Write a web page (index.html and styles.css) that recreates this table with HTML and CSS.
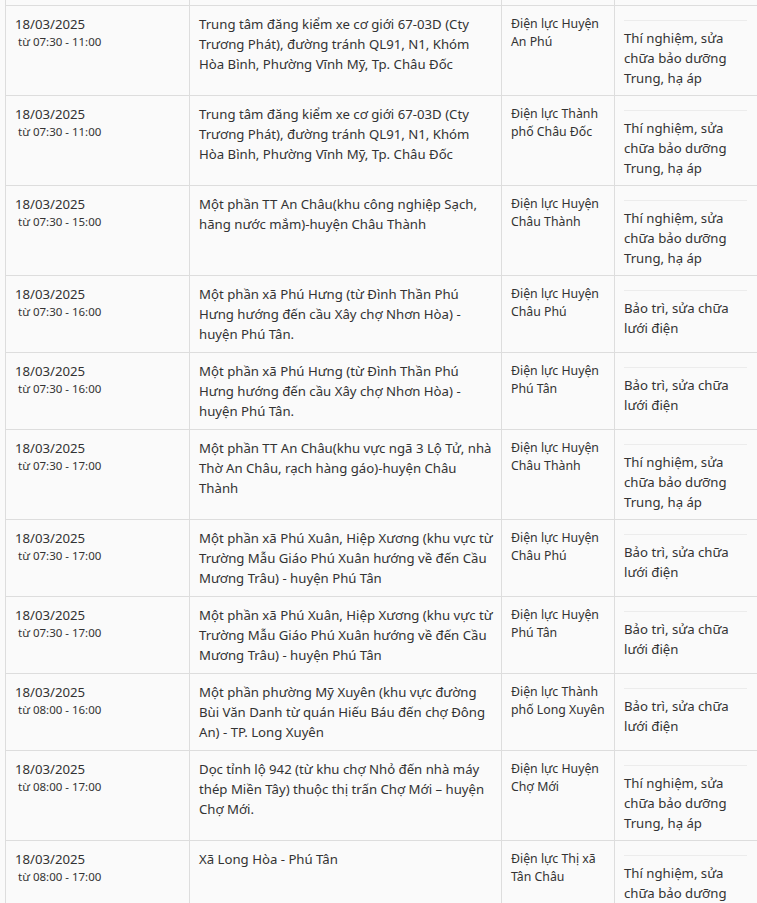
FILE: index.html
```html
<!DOCTYPE html>
<html lang="vi">
<head>
<meta charset="utf-8">
<title>Lịch cắt điện</title>
<link rel="stylesheet" href="styles.css">
</head>
<body>
<div class="wrap">
<table class="sched">
<colgroup>
<col class="c-date"><col class="c-area"><col class="c-unit"><col class="c-reason">
</colgroup>
<tbody>
<tr class="cut"><td></td><td></td><td></td><td></td></tr>
<tr>
<td><div class="date">18/03/2025</div><div class="time">từ 07:30 - 11:00</div></td>
<td class="area">Trung tâm đăng kiểm xe cơ giới 67-03D (Cty<br>Trương Phát), đường tránh QL91, N1, Khóm<br>Hòa Bình, Phường Vĩnh Mỹ, Tp. Châu Đốc</td>
<td class="unit">Điện lực Huyện<br>An Phú</td>
<td class="rcell"><div class="reason">Thí nghiệm, sửa<br>chữa bảo dưỡng<br>Trung, hạ áp</div></td>
</tr>
<tr>
<td><div class="date">18/03/2025</div><div class="time">từ 07:30 - 11:00</div></td>
<td class="area">Trung tâm đăng kiểm xe cơ giới 67-03D (Cty<br>Trương Phát), đường tránh QL91, N1, Khóm<br>Hòa Bình, Phường Vĩnh Mỹ, Tp. Châu Đốc</td>
<td class="unit">Điện lực Thành<br>phố Châu Đốc</td>
<td class="rcell"><div class="reason">Thí nghiệm, sửa<br>chữa bảo dưỡng<br>Trung, hạ áp</div></td>
</tr>
<tr>
<td><div class="date">18/03/2025</div><div class="time">từ 07:30 - 15:00</div></td>
<td class="area">Một phần TT An Châu(khu công nghiệp Sạch,<br>hãng nước mắm)-huyện Châu Thành</td>
<td class="unit">Điện lực Huyện<br>Châu Thành</td>
<td class="rcell"><div class="reason">Thí nghiệm, sửa<br>chữa bảo dưỡng<br>Trung, hạ áp</div></td>
</tr>
<tr>
<td><div class="date">18/03/2025</div><div class="time">từ 07:30 - 16:00</div></td>
<td class="area">Một phần xã Phú Hưng (từ Đình Thần Phú<br>Hưng hướng đến cầu Xây chợ Nhơn Hòa) -<br>huyện Phú Tân.</td>
<td class="unit">Điện lực Huyện<br>Châu Phú</td>
<td class="rcell"><div class="reason">Bảo trì, sửa chữa<br>lưới điện</div></td>
</tr>
<tr>
<td><div class="date">18/03/2025</div><div class="time">từ 07:30 - 16:00</div></td>
<td class="area">Một phần xã Phú Hưng (từ Đình Thần Phú<br>Hưng hướng đến cầu Xây chợ Nhơn Hòa) -<br>huyện Phú Tân.</td>
<td class="unit">Điện lực Huyện<br>Phú Tân</td>
<td class="rcell"><div class="reason">Bảo trì, sửa chữa<br>lưới điện</div></td>
</tr>
<tr>
<td><div class="date">18/03/2025</div><div class="time">từ 07:30 - 17:00</div></td>
<td class="area">Một phần TT An Châu(khu vực ngã 3 Lộ Tử, nhà<br>Thờ An Châu, rạch hàng gáo)-huyện Châu<br>Thành</td>
<td class="unit">Điện lực Huyện<br>Châu Thành</td>
<td class="rcell"><div class="reason">Thí nghiệm, sửa<br>chữa bảo dưỡng<br>Trung, hạ áp</div></td>
</tr>
<tr>
<td><div class="date">18/03/2025</div><div class="time">từ 07:30 - 17:00</div></td>
<td class="area">Một phần xã Phú Xuân, Hiệp Xương (khu vực từ<br>Trường Mẫu Giáo Phú Xuân hướng về đến Cầu<br>Mương Trâu) - huyện Phú Tân</td>
<td class="unit">Điện lực Huyện<br>Châu Phú</td>
<td class="rcell"><div class="reason">Bảo trì, sửa chữa<br>lưới điện</div></td>
</tr>
<tr>
<td><div class="date">18/03/2025</div><div class="time">từ 07:30 - 17:00</div></td>
<td class="area">Một phần xã Phú Xuân, Hiệp Xương (khu vực từ<br>Trường Mẫu Giáo Phú Xuân hướng về đến Cầu<br>Mương Trâu) - huyện Phú Tân</td>
<td class="unit">Điện lực Huyện<br>Phú Tân</td>
<td class="rcell"><div class="reason">Bảo trì, sửa chữa<br>lưới điện</div></td>
</tr>
<tr>
<td><div class="date">18/03/2025</div><div class="time">từ 08:00 - 16:00</div></td>
<td class="area">Một phần phường Mỹ Xuyên (khu vực đường<br>Bùi Văn Danh từ quán Hiếu Báu đến chợ Đông<br>An) - TP. Long Xuyên</td>
<td class="unit">Điện lực Thành<br>phố Long Xuyên</td>
<td class="rcell"><div class="reason">Bảo trì, sửa chữa<br>lưới điện</div></td>
</tr>
<tr>
<td><div class="date">18/03/2025</div><div class="time">từ 08:00 - 17:00</div></td>
<td class="area">Dọc tỉnh lộ 942 (từ khu chợ Nhỏ đến nhà máy<br>thép Miền Tây) thuộc thị trấn Chợ Mới – huyện<br>Chợ Mới.</td>
<td class="unit">Điện lực Huyện<br>Chợ Mới</td>
<td class="rcell"><div class="reason">Thí nghiệm, sửa<br>chữa bảo dưỡng<br>Trung, hạ áp</div></td>
</tr>
<tr>
<td><div class="date">18/03/2025</div><div class="time">từ 08:00 - 17:00</div></td>
<td class="area">Xã Long Hòa - Phú Tân</td>
<td class="unit">Điện lực Thị xã<br>Tân Châu</td>
<td class="rcell"><div class="reason">Thí nghiệm, sửa<br>chữa bảo dưỡng<br>Trung, hạ áp</div></td>
</tr>
</tbody>
</table>
</div>
</body>
</html>
```

FILE: styles.css
```css
html, body {
  margin: 0;
  padding: 0;
  background: #fafafa;
  overflow: hidden;
}
body {
  font-family: "Noto Sans", "Open Sans", sans-serif;
  color: #333;
  font-size: 13.2px;
}
.wrap {
  padding-left: 5px;
}
.sched {
  border-collapse: collapse;
  table-layout: fixed;
  width: 769px;
}
.c-date { width: 184px; }
.c-area { width: 312px; }
.c-unit { width: 113px; }
.c-reason { width: 160px; }
.sched td {
  border: 1px solid #dddddd;
  vertical-align: top;
  padding: 8px 9px 8px 9px;
  line-height: 20px;
  white-space: nowrap;
}
.sched tr.cut td {
  border-top: none;
  padding: 0;
  height: 5px;
}
.date {
  font-size: 13.2px;
  line-height: 20px;
}
.time {
  font-size: 11.5px;
  line-height: 16px;
  padding-left: 3px;
}
.unit {
  font-size: 12.3px;
}
.sched td.unit {
  line-height: 18px;
  padding-top: 9px;
}
.sched td.rcell {
  padding-bottom: 7px;
}
.reason {
  margin-top: 6px;
  border-top: 1px solid #ececec;
  padding-top: 7px;
  width: 123px;
}
```
